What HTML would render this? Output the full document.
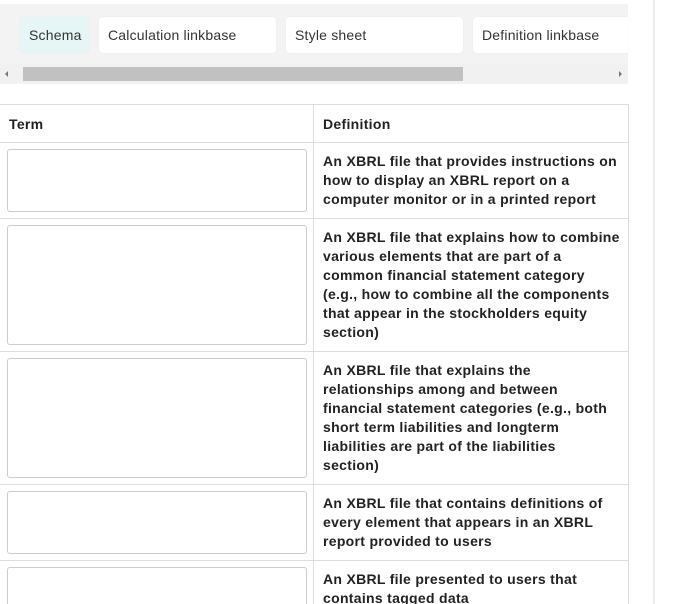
<!DOCTYPE html>
<html><head><style>
*{box-sizing:border-box;margin:0;padding:0}
html,body{width:675px;height:604px;overflow:hidden}
body{background:#fff;font-family:"Liberation Sans",sans-serif;position:relative;color:#222}
.panel{position:absolute;left:0;top:4px;width:628px;height:80px;background:#f3f3f3}
.chip{position:absolute;top:17px;height:36px;background:#fff;border-radius:4px;font-size:14px;line-height:36px;padding-left:9px;color:#333;letter-spacing:0.2px;box-shadow:0 0 1px rgba(0,0,0,.1)}
.sb{position:absolute;left:0;top:63px;width:628px;height:20px;background:#f1f1f1}
.thumb{position:absolute;left:23px;top:67px;width:440px;height:14px;background:#c1c1c1}
.vline{position:absolute;left:653px;top:0;width:2px;height:604px;background:#ececec}
table{position:absolute;left:-1px;top:104px;width:629px;border-collapse:collapse;table-layout:fixed}
td,th{border:1px solid #ddd;vertical-align:top;text-align:left;overflow:hidden}
th{height:38px;font-size:14px;padding:11px 9px 0;font-weight:bold;letter-spacing:0.3px}
td.d{font-size:14px;font-weight:bold;line-height:19px;padding:9px 0 0 9px;letter-spacing:0.3px;white-space:nowrap}
td.t{padding:6px 6px 0 7px}
.in{border:1px solid #ccc;border-radius:3px;width:300px}
</style></head><body>
<div class="panel"></div>
<div class="chip" style="left:20px;width:69px;background:#e6f5f5">Schema</div>
<div class="chip" style="left:99px;width:177px">Calculation linkbase</div>
<div class="chip" style="left:286px;width:177px">Style sheet</div>
<div class="chip" style="left:473px;width:155px;border-radius:4px 0 0 4px">Definition linkbase</div>
<div class="sb"></div>
<div style="position:absolute;left:5px;top:71px;border:3px solid transparent;border-right-color:#777;border-left:0"></div>
<div style="position:absolute;left:619px;top:71px;border:3px solid transparent;border-left-color:#777;border-right:0"></div>
<div class="thumb"></div>
<div class="vline"></div>
<table>
<colgroup><col style="width:314px"><col style="width:315px"></colgroup>
<tr><th>Term</th><th>Definition</th></tr>
<tr style="height:76px"><td class="t"><div class="in" style="height:63px"></div></td><td class="d">An XBRL file that provides instructions on<br>how to display an XBRL report on a<br>computer monitor or in a printed report</td></tr>
<tr style="height:133px"><td class="t"><div class="in" style="height:120px"></div></td><td class="d">An XBRL file that explains how to combine<br>various elements that are part of a<br>common financial statement category<br>(e.g., how to combine all the components<br>that appear in the stockholders equity<br>section)</td></tr>
<tr style="height:133px"><td class="t"><div class="in" style="height:120px"></div></td><td class="d">An XBRL file that explains the<br>relationships among and between<br>financial statement categories (e.g., both<br>short term liabilities and longterm<br>liabilities are part of the liabilities<br>section)</td></tr>
<tr style="height:76px"><td class="t"><div class="in" style="height:63px"></div></td><td class="d">An XBRL file that contains definitions of<br>every element that appears in an XBRL<br>report provided to users</td></tr>
<tr style="height:44px"><td class="t"><div class="in" style="height:40px"></div></td><td class="d">An XBRL file presented to users that<br>contains tagged data</td></tr>
</table>
</body></html>
